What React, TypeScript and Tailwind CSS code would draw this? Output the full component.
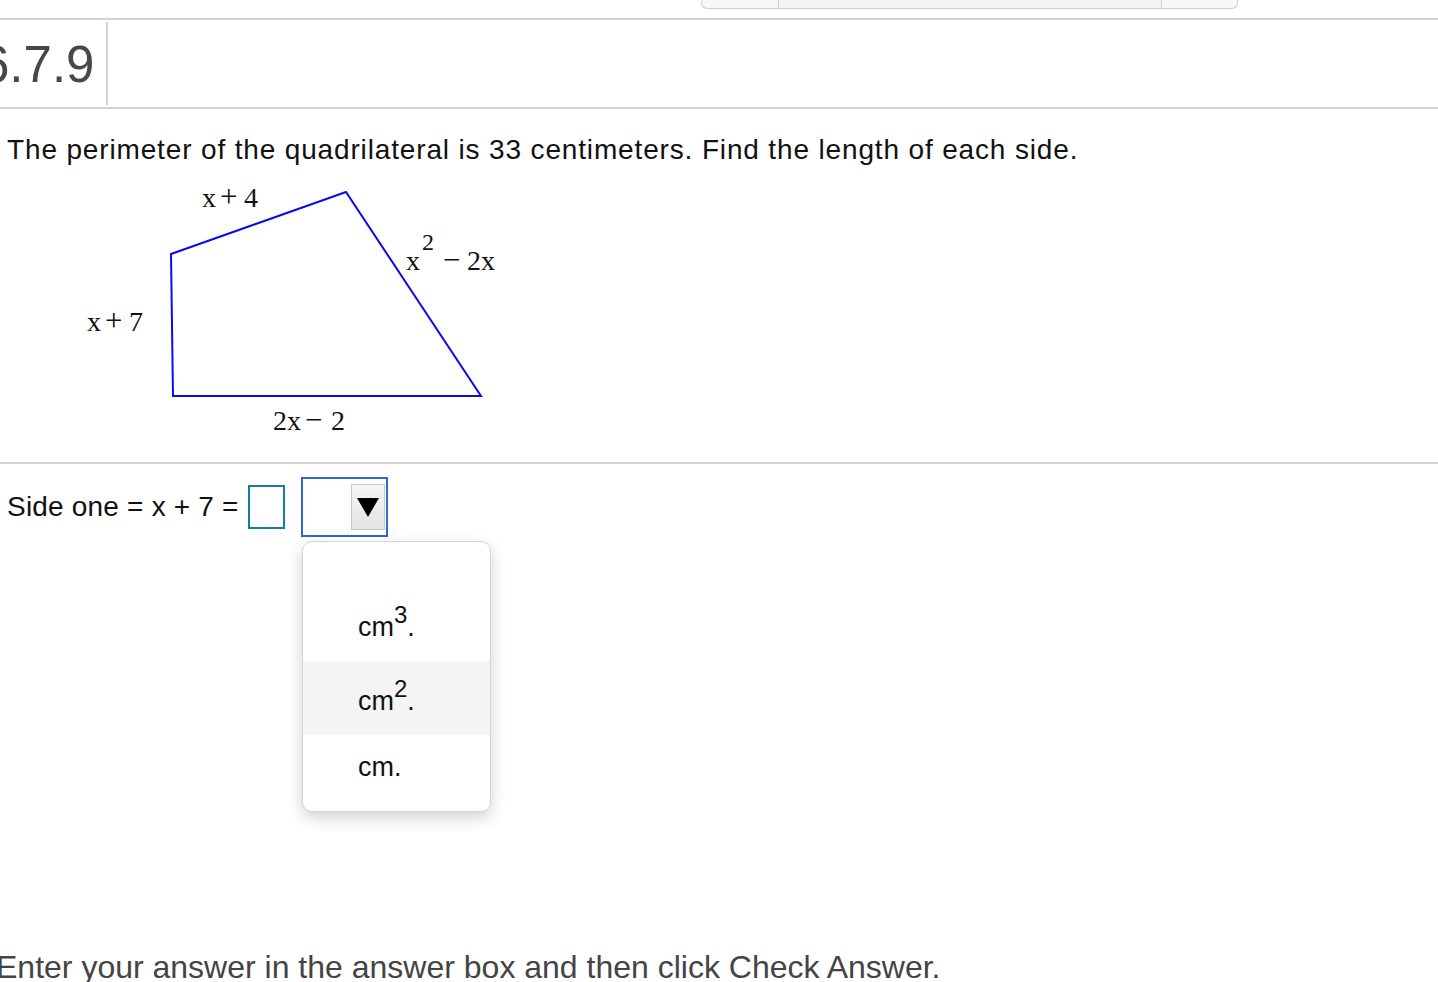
import React from "react";

const sans = { fontFamily: '"Liberation Sans", Arial, sans-serif' };

function Figure() {
  return (
    <svg width="520" height="280" viewBox="0 170 520 280" className="block">
      <polygon
        points="171,254 346,192 481,396 173,396"
        fill="none"
        stroke="#0a0aee"
        strokeWidth="2"
        strokeLinejoin="miter"
      />
      <g fontFamily='"Liberation Serif", "Times New Roman", serif' fontSize="28" fill="#111">
        <text x="202" y="207">x</text>
        <text x="220" y="207" fontSize="31">+</text>
        <text x="244" y="207">4</text>

        <text x="406" y="270">x</text>
        <text x="422" y="250" fontSize="24">2</text>
        <text x="443" y="270" fontSize="31">−</text>
        <text x="467" y="270">2x</text>

        <text x="87" y="331">x</text>
        <text x="105" y="331" fontSize="31">+</text>
        <text x="129" y="331">7</text>

        <text x="273" y="430">2x</text>
        <text x="305" y="430" fontSize="31">−</text>
        <text x="331" y="430">2</text>
      </g>
    </svg>
  );
}

export default function App() {
  return (
    <div className="relative w-[1438px] h-[982px] overflow-hidden bg-white text-black" style={sans}>
      {/* top bar */}
      <div className="h-[20px] border-b-2 border-[#d0d3de]">
        <div className="ml-[701px] w-[537px] h-[9px] flex border border-t-0 border-[#cfcfcf] rounded-b-[6px] bg-[#f7f7f7] overflow-hidden">
          <div className="w-[77px] border-r border-[#cfcfcf]" />
          <div className="w-[383px] border-r border-[#cfcfcf] bg-[#f4f4f4]" />
          <div className="flex-1" />
        </div>
      </div>
      {/* header */}
      <div className="h-[89px] border-b-2 border-[#d0d3de] flex">
        <div className="w-[108px] pt-[2px] pb-[2px] flex">
          <div className="w-[106px] h-full flex items-center overflow-hidden">
            <span className="ml-[-19px] text-[51px] leading-none text-[#474747] pt-[2px]">6.7.9</span>
          </div>
          <div className="w-[2px] h-full bg-[#d0d3de]" />
        </div>
      </div>
      {/* question */}
      <div className="pl-[7px] pt-[25px] text-[28px] leading-[32px] tracking-[0.85px] text-[#111] whitespace-nowrap">
        The perimeter of the quadrilateral is 33 centimeters. Find the length of each side.
      </div>
      <div className="mt-[4px] h-[294px] border-b-2 border-[#d0d3de]">
        <Figure />
      </div>
      {/* answer row */}
      <div className="relative pl-[7px] pt-[13px] flex items-center">
        <span className="w-[231px] text-[28px] tracking-[0.2px] text-[#111] whitespace-pre">Side one = x + 7 =</span>
        <div className="ml-[10px] w-[37px] h-[44px] border-2 border-[#10809e]" />
        <div className="ml-[16px] w-[87px] h-[60px] border-2 border-[#3366cc] flex items-center justify-end pr-[1px]">
          <div className="w-[34px] h-[46px] border border-[#c8c8c8] bg-gradient-to-b from-[#f6f6f6] to-[#e4e4e4] flex items-center justify-center">
            <svg width="24" height="22" viewBox="0 0 24 22">
              <polygon points="1,2 23,2 12,21" fill="#000" />
            </svg>
          </div>
        </div>
        {/* dropdown menu */}
        <div className="absolute left-[302px] top-[77px] w-[189px] h-[271px] rounded-[10px] border border-[#d6d6d6] bg-white shadow-[0_6px_16px_rgba(0,0,0,0.18)] overflow-hidden text-[27px] text-[#111]">
          <div className="h-[40px]" />
          <div className="h-[79px] pl-[55px] flex items-end pb-[14px]">
            <span>cm<sup className="text-[24px] top-[-13px]">3</sup>.</span>
          </div>
          <div className="h-[74px] pl-[55px] bg-[#f4f4f4] flex items-center pt-[6px]">
            <span>cm<sup className="text-[24px] top-[-13px]">2</sup>.</span>
          </div>
          <div className="h-[64px] pl-[55px] flex items-center">
            <span>cm.</span>
          </div>
        </div>
      </div>
      {/* bottom text */}
      <div className="absolute left-[-4px] top-[947px] text-[32px] leading-[40px] text-[#444] whitespace-nowrap">
        Enter your answer in the answer box and then click Check Answer.
      </div>
    </div>
  );
}
